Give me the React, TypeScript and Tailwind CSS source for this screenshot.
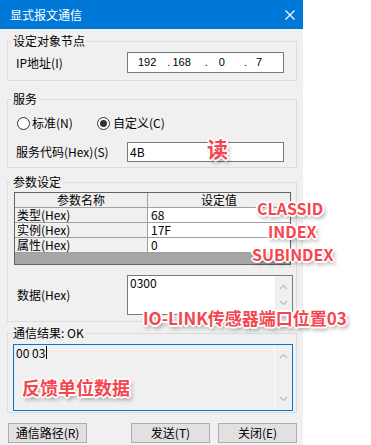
import React from "react";

const ann =
  "absolute whitespace-nowrap text-[#f5454f] font-['Noto_Sans_CJK_SC',sans-serif] font-bold [text-shadow:-1px_-1px_0_#fff,1px_-1px_0_#fff,-1px_1px_0_#fff,1px_1px_0_#fff,0_-2px_0_#fff,0_2px_0_#fff,-2px_0_0_#fff,2px_0_0_#fff,2px_3px_4px_rgba(0,0,0,0.5)]";

function Chevron({ up }: { up?: boolean }) {
  return (
    <svg width="9" height="6" viewBox="0 0 9 6">
      <polyline
        points={up ? "1,5 4.5,1.5 8,5" : "1,1 4.5,4.5 8,1"}
        fill="none"
        stroke="#bcbcbc"
        strokeWidth="1.2"
      />
    </svg>
  );
}

function Radio({ checked }: { checked?: boolean }) {
  return (
    <span className="w-[13px] h-[13px] rounded-full border border-[#333333] bg-white flex items-center justify-center">
      {checked && <span className="w-[7px] h-[7px] rounded-full bg-[#333333]" />}
    </span>
  );
}

export default function App() {
  return (
    <div className="relative w-[371px] h-[445px] bg-white flex overflow-hidden font-['Noto_Sans_CJK_SC',sans-serif] text-[12px] text-black">
      <div className="w-[303px] h-[445px] bg-[#f0f0f0] flex flex-col">
        {/* title bar */}
        <div className="h-[29px] bg-[#0078d7] flex items-center justify-between pl-[10px] pr-[8px] text-white text-[12px]">
          <span>显式报文通信</span>
          <svg width="10" height="10" viewBox="0 0 10 10">
            <path d="M0.5 0.5 L9.5 9.5 M9.5 0.5 L0.5 9.5" stroke="#ffffff" strokeWidth="1.1" />
          </svg>
        </div>

        {/* group 1 */}
        <fieldset className="mt-[5px] ml-[7px] w-[290px] border border-[#dcdcdc] px-0 pt-[4px] pb-[7px] min-w-0">
          <legend className="ml-[3px] px-[2px] leading-[14px]">设定对象节点</legend>
          <div className="flex items-center pl-[8px]">
            <span className="w-[111px]">IP地址(I)</span>
            <div className="w-[157px] h-[21px] border border-[#7a7a7a] bg-white flex items-center font-['Liberation_Sans',sans-serif] text-[11px]">
              <span className="ml-[10px]">192</span>
              <span className="ml-[11px]">.</span>
              <span className="ml-[2px]">168</span>
              <span className="ml-[14px]">.</span>
              <span className="ml-[11px]">0</span>
              <span className="ml-[19px]">.</span>
              <span className="ml-[9px]">7</span>
            </div>
          </div>
        </fieldset>

        {/* group 2 */}
        <fieldset className="mt-[11px] ml-[7px] w-[290px] border border-[#dcdcdc] px-0 pt-[9px] pb-[5px] min-w-0">
          <legend className="ml-[3px] px-[2px] leading-[14px]">服务</legend>
          <div className="flex items-center h-[16px] pl-[9px]">
            <div className="w-[80px] flex items-center">
              <Radio />
              <span className="ml-[2px]">标准(N)</span>
            </div>
            <Radio checked />
            <span className="ml-[3px]">自定义(C)</span>
          </div>
          <div className="mt-[11px] flex items-center pl-[8px]">
            <span className="w-[111px]">服务代码(Hex)(S)</span>
            <div className="w-[157px] h-[20px] border border-[#7a7a7a] bg-white pl-[2px] flex items-center">4B</div>
          </div>
        </fieldset>

        {/* group 3 */}
        <fieldset className="mt-[7px] ml-[7px] w-[290px] border border-[#dcdcdc] px-0 pt-[3px] pb-[6px] min-w-0">
          <legend className="ml-[3px] px-[2px] leading-[14px]">参数设定</legend>
          <div className="ml-[6px] w-[277px] h-[73px] border border-[#646464] flex flex-col text-[12px] leading-[14px]">
            <div className="flex h-[15px] border-b border-[#a0a0a0] bg-[#f0f0f0]">
              <div className="w-[133px] border-r border-[#a0a0a0] text-center">参数名称</div>
              <div className="flex-1 text-center">设定值</div>
            </div>
            {[
              ["类型(Hex)", "68"],
              ["实例(Hex)", "17F"],
              ["属性(Hex)", "0"],
            ].map(([k, v]) => (
              <div key={k} className="flex h-[15px] border-b border-[#a0a0a0]">
                <div className="w-[133px] border-r border-[#a0a0a0] bg-[#f0f0f0] pl-[2px]">{k}</div>
                <div className="flex-1 bg-white pl-[3px]">{v}</div>
              </div>
            ))}
            <div className="flex-1 bg-[#a6a6a6]" />
          </div>
          <div className="mt-[10px] flex items-center pl-[9px]">
            <span className="w-[110px]">数据(Hex)</span>
            <div className="w-[166px] h-[40px] border border-[#7a7a7a] bg-white flex">
              <div className="flex-1 pl-[2px] leading-[14px]">0300</div>
              <div className="w-[17px] bg-[#f0f0f0] flex flex-col items-center justify-between py-[8px]">
                <Chevron up />
                <Chevron />
              </div>
            </div>
          </div>
        </fieldset>

        {/* group 4 */}
        <fieldset className="mt-[4px] ml-[7px] w-[290px] border border-[#dcdcdc] px-0 pt-[4px] pb-[1px] min-w-0">
          <legend className="ml-[3px] px-[2px] leading-[14px]">通信结果: OK</legend>
          <div className="ml-[5px] w-[280px] h-[67px] border border-[#0078d7] bg-[#f0f0f0] flex">
            <div className="flex-1 pl-[2px] pt-[1px] leading-[14px] flex items-start">
              <span>00 03</span>
              <span className="w-px h-[13px] bg-black ml-px" />
            </div>
            <div className="w-[18px] border-l border-[#fafafa] flex flex-col items-center justify-between py-[8px]">
              <Chevron up />
              <Chevron />
            </div>
          </div>
        </fieldset>

        {/* buttons */}
        <div className="mt-[10px] flex pl-[8px] pr-[6px]">
          <button className="w-[79px] h-[20px] bg-[#e1e1e1] border border-[#adadad] text-[12px] leading-[18px]">通信路径(R)</button>
          <div className="flex-1" />
          <button className="w-[79px] h-[20px] bg-[#e1e1e1] border border-[#adadad] text-[12px] leading-[18px]">发送(T)</button>
          <button className="ml-[8px] w-[79px] h-[20px] bg-[#e1e1e1] border border-[#adadad] text-[12px] leading-[18px]">关闭(E)</button>
        </div>
      </div>

      {/* annotations */}
      <span className={`${ann} left-[207px] top-[137px] text-[21px] leading-[22px]`}>读</span>
      <span className={`${ann} left-[257px] top-[200px] text-[16px] leading-[17px]`}>CLASSID</span>
      <span className={`${ann} left-[268px] top-[223px] text-[16px] leading-[17px]`}>INDEX</span>
      <span className={`${ann} left-[252px] top-[246px] text-[16px] leading-[17px]`}>SUBINDEX</span>
      <span className={`${ann} left-[143px] top-[309px] text-[17px] leading-[18px]`}>IO-LINK传感器端口位置03</span>
      <span className={`${ann} left-[22px] top-[378px] text-[18px] leading-[19px]`}>反馈单位数据</span>
    </div>
  );
}
